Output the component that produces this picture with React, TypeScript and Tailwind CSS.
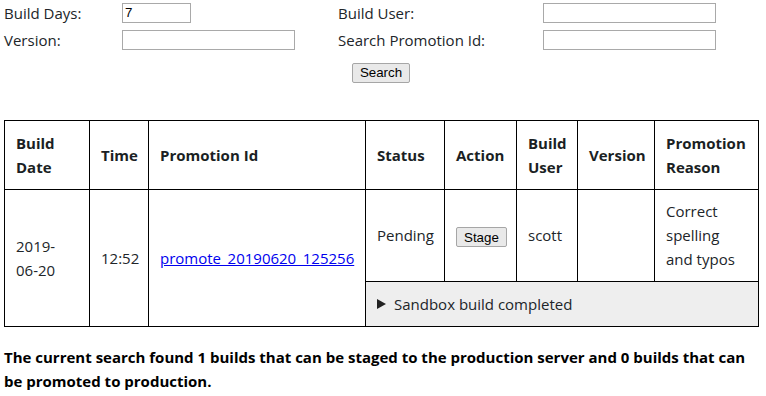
import React from 'react';

const font = { fontFamily: '"Segoe UI", "Open Sans", "Noto Sans", sans-serif' };

function Field({ width, value }: { width: string; value?: string }) {
  return (
    <input
      readOnly
      value={value ?? ''}
      className={`h-[20px] border border-[#a9a9a9] bg-white px-[2px] text-[13.33px] text-black outline-none ${width}`}
      style={{ fontFamily: '"Liberation Sans", Arial, sans-serif' }}
    />
  );
}

function OldButton({ label }: { label: string }) {
  return (
    <button
      className="h-[20px] rounded-[2px] border border-[#a6a6a6] bg-[#e9e9e9] px-[7px] text-[13.33px] leading-none text-black"
      style={{ fontFamily: '"Liberation Sans", Arial, sans-serif' }}
    >
      {label}
    </button>
  );
}

export default function App() {
  return (
    <div className="min-h-screen bg-white text-[15px] leading-[24px] text-[#212529]" style={font}>
      <div className="grid grid-cols-[118px_216px_205px_auto] pl-[4px]">
        <div className="flex h-[26px] items-center">Build Days:</div>
        <div className="flex h-[26px] items-center">
          <Field width="w-[69px]" value="7" />
        </div>
        <div className="flex h-[26px] items-center">Build User:</div>
        <div className="flex h-[26px] items-center">
          <Field width="w-[173px]" />
        </div>
        <div className="flex h-[28px] items-center">Version:</div>
        <div className="flex h-[28px] items-center">
          <Field width="w-[173px]" />
        </div>
        <div className="flex h-[28px] items-center">Search Promotion Id:</div>
        <div className="flex h-[28px] items-center">
          <Field width="w-[173px]" />
        </div>
      </div>
      <div className="flex h-[38px] items-center justify-center pr-[4px]">
        <OldButton label="Search" />
      </div>

      <div className="pl-[4px] pt-[28px]">
        <table className="w-[754px] table-fixed border-collapse border border-black">
          <colgroup>
            <col className="w-[85px]" />
            <col className="w-[59px]" />
            <col className="w-[217px]" />
            <col className="w-[79px]" />
            <col className="w-[72px]" />
            <col className="w-[61px]" />
            <col className="w-[77px]" />
            <col className="w-[104px]" />
          </colgroup>
          <thead>
            <tr className="h-[69px] text-left font-bold text-[#1b1f24]">
              <th className="border border-black px-[11px] pb-[1px]">Build Date</th>
              <th className="border border-black px-[11px] pb-[1px]">Time</th>
              <th className="border border-black px-[11px] pb-[1px]">Promotion Id</th>
              <th className="border border-black px-[11px] pb-[1px]">Status</th>
              <th className="border border-black px-[11px] pb-[1px]">Action</th>
              <th className="border border-black px-[11px] pb-[1px]">Build User</th>
              <th className="border border-black px-[11px] pb-[1px]">Version</th>
              <th className="border border-black px-[11px] pb-[1px]">Promotion Reason</th>
            </tr>
          </thead>
          <tbody>
            <tr className="h-[92px]">
              <td rowSpan={2} className="border border-black px-[11px]">
                2019-
                <br />
                06-20
              </td>
              <td rowSpan={2} className="border border-black px-[11px]">
                12:52
              </td>
              <td rowSpan={2} className="whitespace-nowrap border border-black px-[11px]">
                <a href="#" className="text-[#0000ee] underline">
                  promote_20190620_125256
                </a>
              </td>
              <td className="border border-black px-[11px] pb-[1px]">Pending</td>
              <td className="border border-black px-[11px]">
                <OldButton label="Stage" />
              </td>
              <td className="border border-black px-[11px] pb-[1px]">scott</td>
              <td className="border border-black px-[11px]"></td>
              <td className="border border-black px-[11px] pb-[1px]">Correct spelling and typos</td>
            </tr>
            <tr className="h-[45px] bg-[#eeeeee]">
              <td colSpan={5} className="border border-black px-[11px]">
                <div className="flex items-center gap-[8px]">
                  <svg width="9" height="10" viewBox="0 0 9 10" className="shrink-0">
                    <path d="M0 0 L9 5 L0 10 Z" fill="#222" />
                  </svg>
                  <span>Sandbox build completed</span>
                </div>
              </td>
            </tr>
          </tbody>
        </table>
      </div>

      <p className="mt-[18px] pl-[4px] pr-[8px] font-bold text-black">
        The current search found 1 builds that can be staged to the production server and 0 builds that can be
        promoted to production.
      </p>
    </div>
  );
}
